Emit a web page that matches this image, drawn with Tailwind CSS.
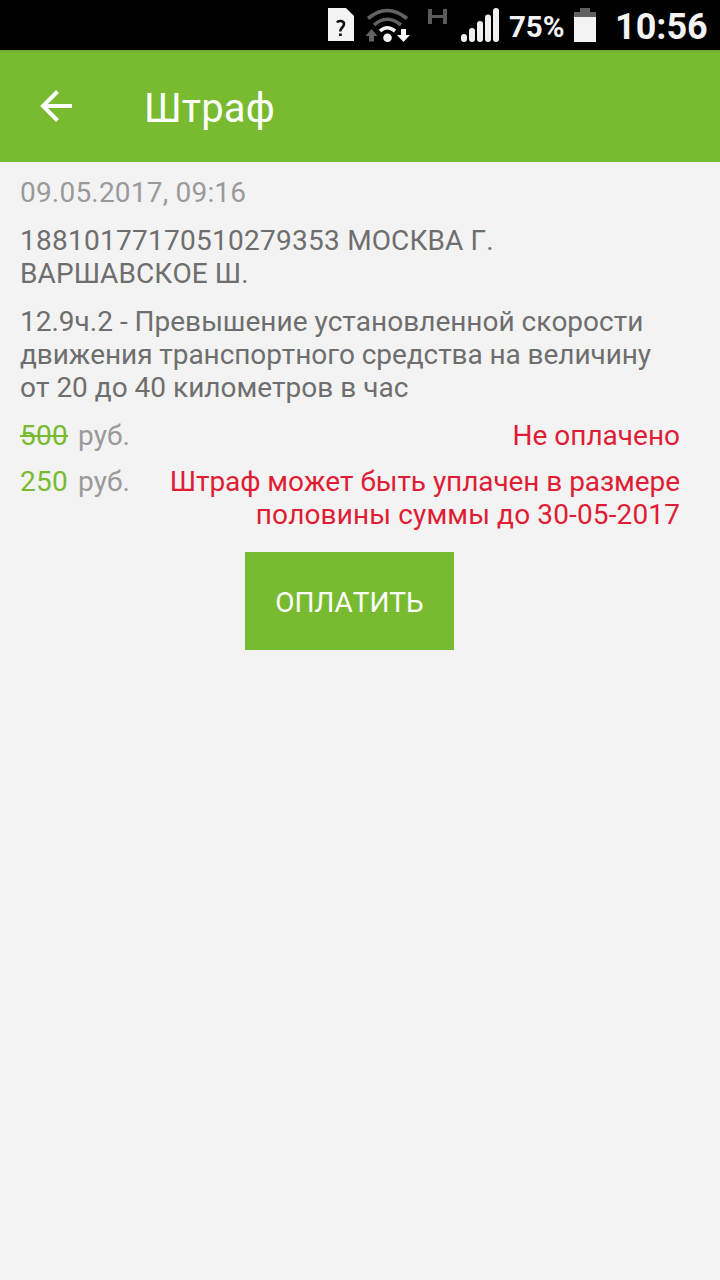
<!DOCTYPE html>
<html lang="ru"><head><meta charset="utf-8"><title>Штраф</title><script src="https://cdn.jsdelivr.net/npm/@tailwindcss/browser@4"></script></head>
<body class="bg-[#f3f3f3] h-[1280px] overflow-hidden font-['Roboto',sans-serif] [font-kerning:none] text-[28px] leading-[33px] text-[#6e6e6e]">
<div class="h-[50px] bg-black flex items-start text-[#f3f3f3]">
  <svg class="ml-[320px] w-[140px] h-[50px] shrink-0" viewBox="0 0 140 50" fill="none">
    <path d="M8 8h18l8 8v25H8z" fill="#f3f3f3"/>
    <path d="M17 22.500c1-2 7-2.500 7 1.500 0 3.500-3.700 3.500-3.700 7.500" stroke="#111" stroke-width="2.600"/><path d="M19 33.500h2.800v2.500H19z" fill="#111"/>
    <path d="M48 18.500Q67 2.500 87 18.500M54 25Q67 13.500 81 25" stroke="#626262" stroke-width="3.600"/>
    <path d="M60 31Q67 24.500 75 31" stroke="#f5f5f5" stroke-width="3.600"/>
    <circle cx="67.500" cy="37.700" r="4.300" fill="#f5f5f5"/>
    <path d="M51.500 29l6 7h-3.500v5.500h-5V36h-3.500z" fill="#626262"/>
    <path d="M81 29h5v6h4l-6.500 7-6.500-7h4z" fill="#f5f5f5"/>
    <path d="M110 9v15M125 9v15" stroke="#5b5b5b" stroke-width="4"/><path d="M108 16.500h19" stroke="#5b5b5b" stroke-width="3"/>
  </svg>
  <svg class="w-[49px] h-[50px] shrink-0" viewBox="0 0 49 50" fill="#f0f0f0">
    <rect x="1" y="34" width="6" height="8" rx="3"/><rect x="9" y="28" width="6" height="14" rx="3"/><rect x="17" y="21" width="6" height="21" rx="3"/><rect x="25" y="14.500" width="6" height="27.500" rx="3"/><rect x="33" y="8" width="6" height="34" rx="3"/>
  </svg>
  <span class="w-[65px] shrink-0 mt-[11px] text-[29.500px] leading-[33px] font-bold tracking-[-0.1px]">75%</span>
  <svg class="w-[22px] h-[50px] shrink-0" viewBox="0 0 22 50"><path d="M6 8h10v4h6v5H0v-5h6z" fill="#606060"/><path d="M0 17h22v25H0z" fill="#f3f3f3"/></svg>
  <time class="ml-[19px] mt-[5px] text-[36px] leading-[44px] font-bold whitespace-nowrap">10:56</time>
</div>
<header class="h-28 bg-[#78bb31] bg-linear-to-b from-[#6eab2d] to-[#78bb31] to-[4px] flex items-center pl-10 text-[40px] text-white">
  <svg class="w-8 h-8" viewBox="0 0 32 32" fill="none" stroke="#fff" stroke-width="4"><path d="M32 16H4M17.500 1.500L3 16l14.500 14.500"/></svg>
  <h1 class="ml-[72px] mt-1 tracking-[0.15px]">Штраф</h1>
</header>
<main class="pl-5 pr-10 pt-3.5">
  <p class="text-[#9a9a9a] tracking-[0.2px]">09.05.2017, 09:16</p>
  <p class="mt-[15px] tracking-[0.1px]"><span class="tracking-[0.270px]">18810177170510279353</span> МОСКВА Г.<br>ВАРШАВСКОЕ Ш.</p>
  <p class="mt-[15px] whitespace-nowrap">12.9ч.2 - Превышение установленной скорости<br><span class="tracking-[-0.07px]">движения транспортного средства на величину</span><br>от 20 до 40 километров в час</p>
  <div class="mt-[15px] flex justify-between text-[#9a9a9a]">
    <p><span class="mr-2.5 line-through decoration-2 text-[#78bb31] tracking-[0.270px]">500</span>руб.</p><p class="text-[#df1d35]">Не оплачено</p>
  </div>
  <div class="mt-[13px] flex justify-between text-[#9a9a9a]">
    <p><span class="mr-2.5 text-[#78bb31] tracking-[0.270px]">250</span>руб.</p><p class="text-[#df1d35] text-right whitespace-nowrap"><span class="tracking-[-0.07px]">Штраф может быть уплачен в размере</span><br><span class="tracking-[0.13px]">половины суммы до 30-05-2017</span></p>
  </div>
  <button class="block ml-[225px] mt-[21px] w-[209px] h-[98px] bg-[#78bb31] text-white"><span class="relative top-px">ОПЛАТИТЬ</span></button>
</main>
</body></html>
